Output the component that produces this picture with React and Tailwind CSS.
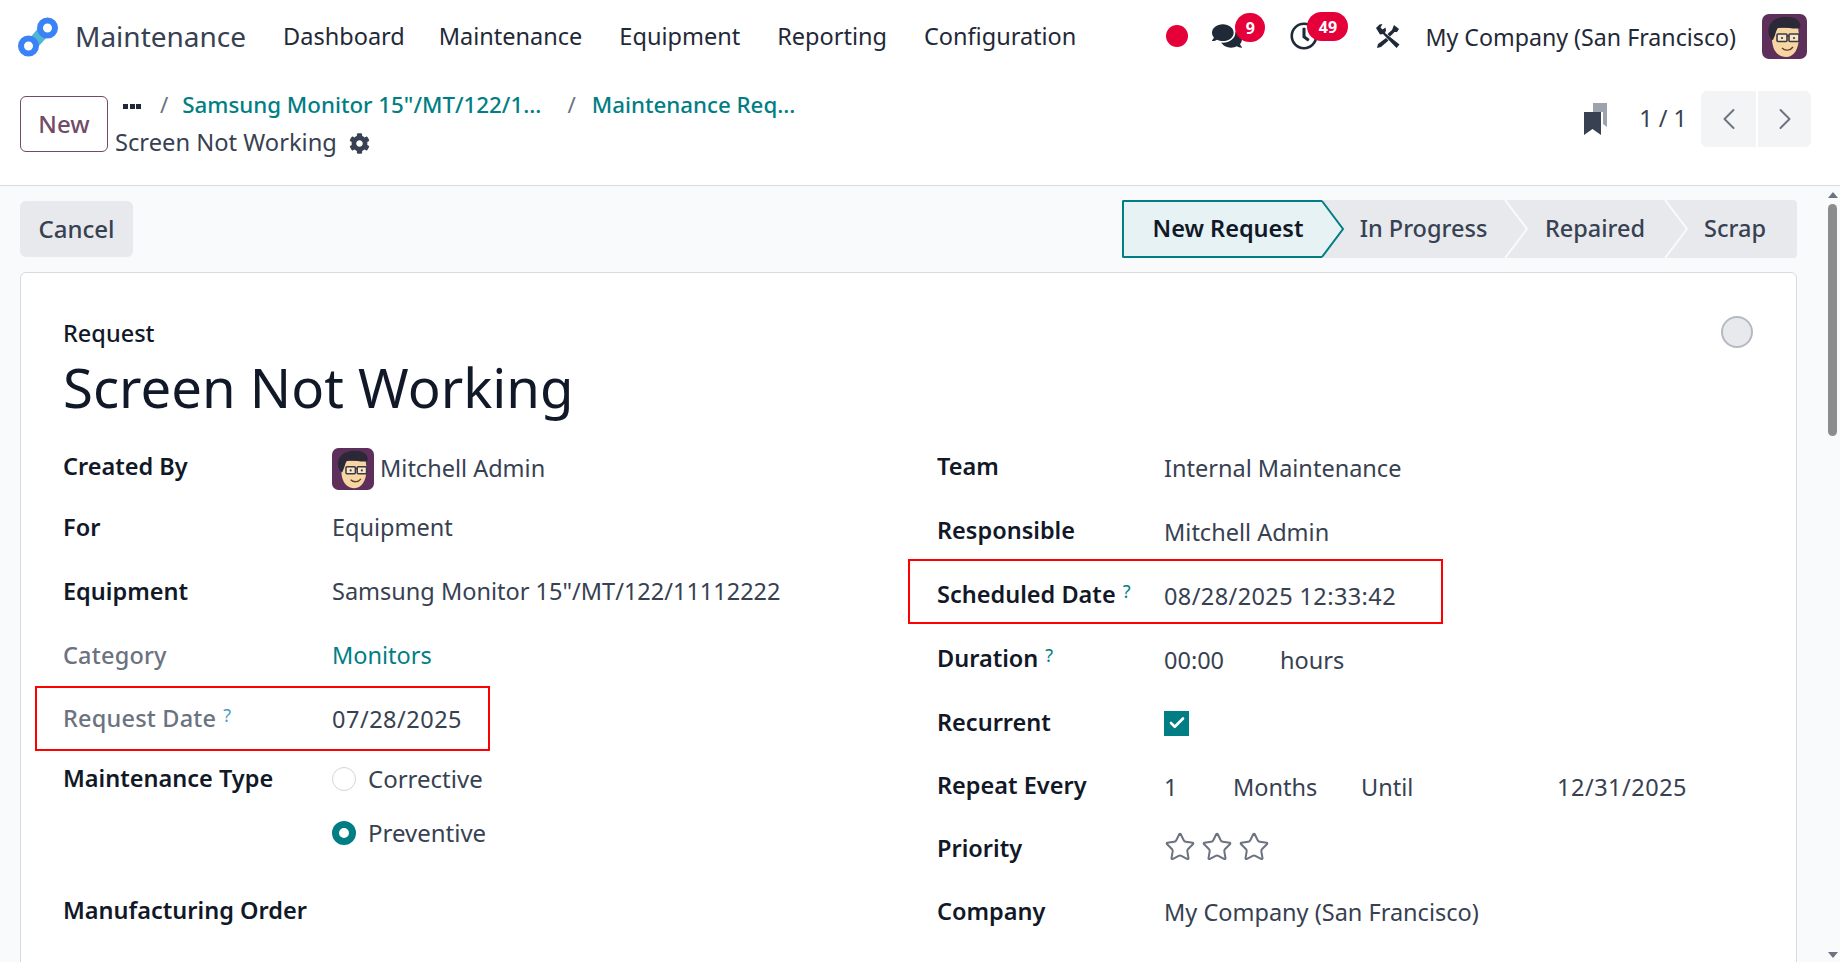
import { FaComments, FaRegClock, FaCog } from 'react-icons/fa';
import { ChevronLeft, ChevronRight, Star, Check } from 'lucide-react';

const Logo = () => (
  <svg className="w-[40px] h-[40px] mt-[2px]" viewBox="0 0 40 40">
    <path d="M11 22 L22 9 L31 18 L19 31 Z" fill="#4fb6d3" />
    <circle cx="29.5" cy="11" r="7.5" fill="#fff" stroke="#3b82f6" strokeWidth="6" />
    <circle cx="10.5" cy="29" r="7.5" fill="#fff" stroke="#3b82f6" strokeWidth="6" />
  </svg>
);

// cartoon avatar used in the navbar and on the form
const Avatar = ({ className }) => (
  <svg className={className} viewBox="0 0 45 45">
    <rect width="45" height="45" rx="7" fill="#5f2f5c" />
    <path d="M10 24 C10 38 17 43 24 43 C32 43 37 35 37 22 L36 13 L14 14 Z" fill="#f6d7a3" />
    <path d="M7 21 C4 9 14 2 26 3 C35 3 40 9 38 14 C33 16 22 12 16 14 C14 16 14 20 11 26 C9 26 8 24 7 21 Z" fill="#2b2838" />
    <rect x="15" y="20" width="10" height="7.5" rx="1" fill="#fbe6c4" stroke="#3b3846" strokeWidth="1.6" />
    <rect x="27" y="20" width="10" height="7.5" rx="1" fill="#fbe6c4" stroke="#3b3846" strokeWidth="1.6" />
    <path d="M25 22 H27" stroke="#3b3846" strokeWidth="1.6" />
    <circle cx="20" cy="24" r="1.1" fill="#3b3846" />
    <circle cx="32" cy="24" r="1.1" fill="#3b3846" />
    <path d="M20 34 C23 37 28 37 31 33" fill="none" stroke="#6b3a2a" strokeWidth="1.4" />
  </svg>
);

const ToolsIcon = () => (
  <svg className="w-[26px] h-[26px]" viewBox="0 0 26 26" fill="#1f2937">
    <path d="M1 5 L4.5 1.5 L7.5 1 L5.5 4.5 L7.5 6.5 L10.5 4.5 L11 7.5 L10 10 L24.5 21.5 L21.5 25 L8 11 L5 11.5 Z" />
    <path d="M19 2 L24 6 L22 9 L19.5 9 L15 13.5 L12.5 11 L17 7 Z" />
    <path d="M11 15 L13.5 17.5 L6 24 L2 25 L3 21 Z" />
  </svg>
);

const BookmarksIcon = () => (
  <svg className="w-[24px] h-[33px]" viewBox="0 0 24 33">
    <path d="M9 0 H23 V24 L19 21 V9 H9 Z" fill="#9ca3af" />
    <path d="M0 9 H17 V32 L8.5 26 L0 32 Z" fill="#374151" />
  </svg>
);

const Help = ({ muted }) => (
  <sup className={`ml-[7px] text-[18px] font-normal relative -top-[5px] ${muted ? 'text-[#4d9fc4]' : 'text-[#017e84]'}`}>?</sup>
);

const RedBox = ({ className }) => <div className={`absolute border-2 border-[#ff0000] ${className}`} />;

const Stage = ({ label, className, last }) => (
  <div className={`relative flex items-center justify-center text-[#374151] font-medium ${className}`}>
    {label}
    {!last && (
      <svg className="absolute -right-[23px] top-0 w-[24px] h-[58px] z-10" viewBox="0 0 24 58">
        <path d="M1 0 L23 29 L1 58" fill="#e7e9ed" stroke="#f9fafb" strokeWidth="2" />
      </svg>
    )}
  </div>
);

const Label = ({ children, muted, high }) => (
  <span className={`block ${high ? 'mb-[5px]' : 'mb-[1px]'} ${muted ? 'font-medium tracking-[0.2px] text-[#6b7280]' : 'font-semibold text-[#111827]'}`}>{children}</span>
);

export default function App() {
  return (
    <div className="h-[962px] overflow-hidden flex flex-col bg-white font-['Noto_Sans',sans-serif] text-[23.5px] text-[#374151]">
      {/* navbar */}
      <header className="h-[72px] shrink-0 flex items-center pl-[18px] pr-[33px]">
        <Logo />
        <span className="ml-[17px] mr-[37px] text-[28px] text-[#374151]">Maintenance</span>
        <nav className="flex gap-[37px] mt-[2px] text-[#1f2937]">
          <span className="-mr-[3px]">Dashboard</span>
          <span>Maintenance</span>
          <span>Equipment</span>
          <span>Reporting</span>
          <span>Configuration</span>
        </nav>
        <div className="ml-auto flex items-center">
          <span className="w-[22px] h-[22px] rounded-full bg-[#e6003a]" />
          <div className="relative ml-[24px] w-[30px]">
            <FaComments className="w-[30px] h-[28px] text-[#1f2937]" />
            <span className="absolute -top-[9px] left-[23px] w-[30px] h-[29px] rounded-full bg-[#e6003a] text-white text-[16px] font-bold flex items-center justify-center">9</span>
          </div>
          <div className="relative ml-[48px] w-[28px]">
            <FaRegClock className="w-[28px] h-[28px] text-[#1f2937]" />
            <span className="absolute -top-[10px] left-[17px] w-[41px] h-[29px] rounded-full bg-[#e6003a] text-white text-[16px] font-bold flex items-center justify-center">49</span>
          </div>
          <div className="ml-[57px]"><ToolsIcon /></div>
          <span className="ml-[24px] mt-[2px] text-[23.2px] text-[#1f2937]">My Company (San Francisco)</span>
          <Avatar className="ml-[26px] w-[45px] h-[45px]" />
        </div>
      </header>

      {/* control panel */}
      <div className="h-[114px] shrink-0 border-b border-[#d8dadd] flex pl-[20px] pr-[29px]">
        <button className="mt-[24px] w-[88px] h-[56px] rounded-[6px] border border-[#714b67] text-[#714b67] text-[24px] font-medium">New</button>
        <div className="ml-[7px] mt-[17px]">
          <div className="flex items-center h-[32px] text-[22.3px]">
            <span className="ml-[8px] mt-[2px] w-[18px] flex gap-[1.5px]">
              <span className="w-[5px] h-[5px] bg-[#1f2937]" />
              <span className="w-[5px] h-[5px] bg-[#1f2937]" />
              <span className="w-[5px] h-[5px] bg-[#1f2937]" />
            </span>
            <span className="ml-[19px] text-[#6b7280]">/</span>
            <span className="ml-[14px] text-[#017e84] font-medium">Samsung Monitor 15"/MT/122/1...</span>
            <span className="ml-[26px] text-[#6b7280]">/</span>
            <span className="ml-[16px] text-[#017e84] font-medium">Maintenance Req...</span>
          </div>
          <div className="flex items-center h-[38px] mt-[3px] text-[23.7px]">
            <span>Screen Not Working</span>
            <FaCog className="ml-[12px] w-[21px] h-[21px] text-[#374151]" />
          </div>
        </div>
        <div className="ml-auto mt-[19px] h-[56px] flex items-center">
          <BookmarksIcon />
          <span className="ml-[31px] text-[#374151]">1 / 1</span>
          <div className="ml-[14px] flex gap-[2px]">
            <div className="w-[55px] h-[56px] bg-[#f3f4f6] rounded-l-[6px] flex items-center justify-center">
              <ChevronLeft className="w-[36px] h-[36px] text-[#6b7280]" strokeWidth={1.3} />
            </div>
            <div className="w-[53px] h-[56px] bg-[#f3f4f6] rounded-r-[6px] flex items-center justify-center">
              <ChevronRight className="w-[36px] h-[36px] text-[#6b7280]" strokeWidth={1.3} />
            </div>
          </div>
        </div>
      </div>

      {/* sheet area */}
      <div className="flex-1 min-h-0 flex bg-[#f9fafb]">
        <main className="flex-1 min-w-0 pl-[20px] pr-[28px] pt-[14px]">
          <div className="flex justify-between h-[58px]">
            <button className="mt-[1px] w-[113px] h-[56px] rounded-[6px] bg-[#e7e9ed] text-[#374151] text-[24px] font-medium">Cancel</button>
            <div className="flex h-[58px] bg-[#e7e9ed] rounded-r-[4px]">
              <div className="relative w-[200px] pl-[10px] border-y-2 border-l-2 border-[#017e84] bg-[#e6f2f3] rounded-l-[2px] flex items-center justify-center text-[#111827] font-semibold">
                New Request
                <svg className="absolute -right-[23px] -top-[2px] w-[24px] h-[58px] z-20" viewBox="0 0 24 58">
                  <path d="M1 1 L22 29 L1 57" fill="#e6f2f3" stroke="#017e84" strokeWidth="2" />
                </svg>
              </div>
              <Stage label="In Progress" className="w-[183px] pl-[20px]" />
              <Stage label="Repaired" className="w-[160px] pl-[20px]" />
              <Stage label="Scrap" className="w-[132px] pl-[8px]" last />
            </div>
          </div>

          <div className="relative mt-[14px] h-[800px] bg-white border border-[#d8dadd] rounded-t-[6px] pl-[42px] pt-[47px]">
            <span className="absolute right-[43px] top-[43px] w-[32px] h-[32px] rounded-full bg-[#e7e9ed] border-2 border-[#b6bac0]" />
            <div className="leading-[26px] font-medium text-[#111827]">Request</div>
            <h1 className="mt-[9px] leading-[64px] text-[54.5px] text-[#111827]">Screen Not Working</h1>

            <div className="mt-[18px] flex">
              {/* left column */}
              <div className="w-[874px] shrink-0">
                <div className="h-[60px] flex items-center">
                  <div className="w-[269px]"><Label>Created By</Label></div>
                  <Avatar className="mt-[4px] w-[42px] h-[42px]" />
                  <span className="ml-[6px] mt-[4px]">Mitchell Admin</span>
                </div>
                <div className="h-[62px] flex items-center">
                  <div className="w-[269px]"><Label>For</Label></div>
                  <span>Equipment</span>
                </div>
                <div className="h-[66px] flex items-center">
                  <div className="w-[269px]"><Label>Equipment</Label></div>
                  <span>Samsung Monitor 15"/MT/122/11112222</span>
                </div>
                <div className="h-[62px] flex items-center">
                  <div className="w-[269px]"><Label muted>Category</Label></div>
                  <span className="text-[#017e84]">Monitors</span>
                </div>
                <div className="relative h-[65px] flex items-center">
                  <RedBox className="-left-[28px] -top-[1px] w-[455px] h-[65px]" />
                  <div className="w-[269px]"><Label muted>Request Date<Help muted /></Label></div>
                  <span className="tracking-[0.5px]">07/28/2025</span>
                </div>
                <div className="h-[54px] flex items-center">
                  <div className="w-[269px]"><Label>Maintenance Type</Label></div>
                  <span className="w-[24px] h-[24px] rounded-full border border-[#d1d5db]" />
                  <span className="ml-[12px] text-[24px]">Corrective</span>
                </div>
                <div className="h-[54px] flex items-center">
                  <div className="w-[269px]" />
                  <span className="w-[24px] h-[24px] rounded-full border-[7px] border-[#017e84]" />
                  <span className="ml-[12px] text-[24px]">Preventive</span>
                </div>
                <div className="h-[102px] flex items-center">
                  <Label>Manufacturing Order</Label>
                </div>
              </div>

              {/* right column */}
              <div className="flex-1 mt-[2px]">
                <div className="h-[60px] flex items-center">
                  <div className="w-[227px]"><Label high>Team</Label></div>
                  <span>Internal Maintenance</span>
                </div>
                <div className="h-[68px] flex items-center">
                  <div className="w-[227px]"><Label high>Responsible</Label></div>
                  <span>Mitchell Admin</span>
                </div>
                <div className="relative h-[60px] flex items-center">
                  <RedBox className="-left-[29px] -top-[8px] w-[535px] h-[65px]" />
                  <div className="w-[227px]"><Label high>Scheduled Date<Help /></Label></div>
                  <span className="tracking-[0.4px]">08/28/2025 12:33:42</span>
                </div>
                <div className="h-[68px] flex items-center">
                  <div className="w-[227px]"><Label high>Duration<Help /></Label></div>
                  <span className="w-[116px]">00:00</span>
                  <span>hours</span>
                </div>
                <div className="h-[60px] flex items-center">
                  <div className="w-[227px]"><Label high>Recurrent</Label></div>
                  <span className="mb-[4px] w-[25px] h-[25px] bg-[#017e84] flex items-center justify-center">
                    <Check className="w-[18px] h-[18px] text-white" strokeWidth={3.5} />
                  </span>
                </div>
                <div className="h-[66px] flex items-center">
                  <div className="w-[227px]"><Label high>Repeat Every</Label></div>
                  <span className="w-[69px]">1</span>
                  <span className="w-[128px]">Months</span>
                  <span className="w-[196px]">Until</span>
                  <span className="tracking-[0.5px]">12/31/2025</span>
                </div>
                <div className="h-[60px] flex items-center">
                  <div className="w-[227px]"><Label high>Priority</Label></div>
                  <div className="flex gap-[5px] mb-[8px]">
                    <Star className="w-[32px] h-[32px] text-[#6b7280]" strokeWidth={1.5} />
                    <Star className="w-[32px] h-[32px] text-[#6b7280]" strokeWidth={1.5} />
                    <Star className="w-[32px] h-[32px] text-[#6b7280]" strokeWidth={1.5} />
                  </div>
                </div>
                <div className="h-[66px] flex items-center">
                  <div className="w-[227px]"><Label high>Company</Label></div>
                  <span className="mb-[3px]">My Company (San Francisco)</span>
                </div>
              </div>
            </div>
          </div>
        </main>

        {/* scrollbar */}
        <div className="w-[15px] shrink-0 flex flex-col items-center pt-[6px] pb-[4px]">
          <span className="w-0 h-0 border-x-[5px] border-x-transparent border-b-[6px] border-b-[#6b7280]" />
          <span className="mt-[6px] w-[9px] h-[232px] rounded-full bg-[#8c8c8c]" />
          <span className="mt-auto w-0 h-0 border-x-[5px] border-x-transparent border-t-[6px] border-t-[#6b7280]" />
        </div>
      </div>
    </div>
  );
}
